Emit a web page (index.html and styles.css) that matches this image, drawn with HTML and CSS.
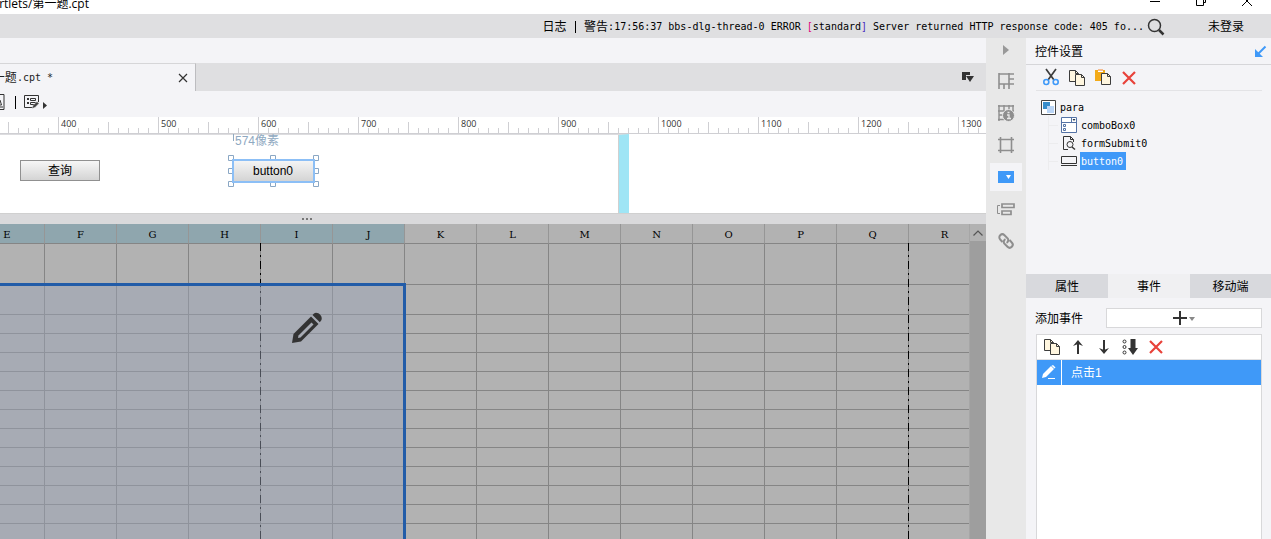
FILE: index.html
```html
<!DOCTYPE html>
<html lang="zh">
<head>
<meta charset="utf-8">
<title>第一题.cpt</title>
<link rel="stylesheet" href="styles.css">
</head>
<body>
<svg class="defs" aria-hidden="true">
  <symbol id="copy" viewBox="0 0 16 16"><path d="M.5.5h6l3 3v8h-9z" fill="#fff6df" stroke="#3c3c3c"/><path d="M6.500.5v3h3" fill="none" stroke="#3c3c3c"/><path d="M6.500 4.500h6l3 3v8h-9z" fill="#fff6df" stroke="#3c3c3c"/><path d="M12.500 4.500v3h3" fill="none" stroke="#3c3c3c"/></symbol>
  <symbol id="remove" viewBox="0 0 16 16"><path d="M2 2l12 12M14 2L2 14" stroke="#e8423a" stroke-width="2.200"/></symbol>
</svg>
<header class="titlebar">
  <span class="path">rtlets/第一题.cpt</span>
  <div class="window-buttons">
    <button aria-label="Minimize"><svg width="12" height="14"><path d="M1 1.500h10" stroke="#000"/></svg></button>
    <button aria-label="Restore"><svg width="12" height="14"><path d="M1.500-2v7.500h7V-2M8.500 2.500h2V-2" fill="none" stroke="#000"/></svg></button>
    <button aria-label="Close"><svg width="12" height="14"><path d="M1 6l10-10M11 6L1-4" stroke="#000"/></svg></button>
  </div>
</header>
<div class="statusbar">
  <p class="log">日志 <i></i> 警告<span class="mono">:17:56:37 bbs-dlg-thread-0 ERROR <b>[</b>standard<em>]</em> Server returned HTTP response code: 405 fo...</span></p>
  <button class="search" aria-label="Search"><svg width="18" height="18"><circle cx="7.500" cy="7.500" r="6" fill="none" stroke="#333" stroke-width="1.500"/><path d="M12 12l4.500 4.500" stroke="#333" stroke-width="2.500"/></svg></button>
  <a class="login" href="#">未登录</a>
</div>
<div class="workspace">
  <main class="editor">
    <div class="spacer"></div>
    <div class="tabs">
      <div class="tab"><span class="tab-name">一题<span class="mono">.cpt *</span></span><button aria-label="Close tab"><svg width="10" height="10"><path d="M1 1l8 8M9 1L1 9" stroke="#333" stroke-width="1.200"/></svg></button></div>
      <button class="tab-list" aria-label="Tab list"><svg width="12" height="10"><path d="M0 0h8v3H4v5H0z" fill="#333"/><path d="M4 4h8L8 10z" fill="#333"/></svg></button>
    </div>
    <div class="toolbar">
      <button aria-label="Preview"><svg width="5" height="16"><path d="M0 .5h4v15H0M0 6l1.500 5H0M0 13h3" fill="none" stroke="#333"/></svg></button>
      <i class="bar"></i>
      <button class="form-edit" aria-label="Edit form"><svg width="24" height="16"><path d="M9 13.500H.5v-12h14V8" fill="none" stroke="#333"/><path d="M3 5h2M3 9h2" stroke="#333" stroke-width="2"/><path d="M6.500 4.500h5v2h-5zM6.500 8.500h5v2h-5z" fill="none" stroke="#333"/><path d="M8 14.500l1-3 4-4 2 2-4 4z" fill="#444" stroke="#f4f4f7" stroke-width=".5"/><path d="M19 8v7l4-3.500z" fill="#333"/></svg></button>
    </div>
    <div class="ruler"><span>400</span><span>500</span><span>600</span><span>700</span><span>800</span><span>900</span><span>1000</span><span>1100</span><span>1200</span><span>1300</span></div>
    <section class="canvas">
      <div class="edge"></div>
      <button class="widget query">查询</button>
      <span class="measure">574像素</span>
      <div class="selected">
        <button class="widget">button0</button>
        <svg width="90" height="32"><path d="M5 5h81v22H5z" fill="none" stroke="#8cbff6" stroke-width="2"/><path d="M.5.5h5v5h-5zM42.500.5h5v5h-5zM85.500.5h5v5h-5zM.5 13.500h5v5h-5zM85.500 13.500h5v5h-5zM.5 26.500h5v5h-5zM42.500 26.500h5v5h-5zM85.500 26.500h5v5h-5z" fill="#fff" stroke="#8aa7c4"/><path d="M5 5h81v22H5z" fill="none" stroke="#8cbff6" stroke-width="2"/></svg>
      </div>
    </section>
    <div class="splitter"><svg width="12" height="3"><path d="M1 0h2v2H1zM5 0h2v2H5zM9 0h2v2H9z" fill="#777"/></svg></div>
    <div class="sheet">
      <div class="grid">
        <table>
          <colgroup><col class="first"><col span="13"></colgroup>
          <thead><tr><th class="on">E</th><th class="on">F</th><th class="on">G</th><th class="on">H</th><th class="on">I</th><th class="on">J</th><th>K</th><th>L</th><th>M</th><th>N</th><th>O</th><th>P</th><th>Q</th><th>R</th></tr></thead>
          <tbody>
            <tr class="tall"><td></td><td></td><td></td><td></td><td></td><td></td><td></td><td></td><td></td><td></td><td></td><td></td><td></td><td></td></tr>
            <tr class="medium"><td></td><td></td><td></td><td></td><td></td><td></td><td></td><td></td><td></td><td></td><td></td><td></td><td></td><td></td></tr>
            <tr><td></td><td></td><td></td><td></td><td></td><td></td><td></td><td></td><td></td><td></td><td></td><td></td><td></td><td></td></tr>
            <tr><td></td><td></td><td></td><td></td><td></td><td></td><td></td><td></td><td></td><td></td><td></td><td></td><td></td><td></td></tr>
            <tr><td></td><td></td><td></td><td></td><td></td><td></td><td></td><td></td><td></td><td></td><td></td><td></td><td></td><td></td></tr>
            <tr><td></td><td></td><td></td><td></td><td></td><td></td><td></td><td></td><td></td><td></td><td></td><td></td><td></td><td></td></tr>
            <tr><td></td><td></td><td></td><td></td><td></td><td></td><td></td><td></td><td></td><td></td><td></td><td></td><td></td><td></td></tr>
            <tr><td></td><td></td><td></td><td></td><td></td><td></td><td></td><td></td><td></td><td></td><td></td><td></td><td></td><td></td></tr>
            <tr><td></td><td></td><td></td><td></td><td></td><td></td><td></td><td></td><td></td><td></td><td></td><td></td><td></td><td></td></tr>
            <tr><td></td><td></td><td></td><td></td><td></td><td></td><td></td><td></td><td></td><td></td><td></td><td></td><td></td><td></td></tr>
            <tr><td></td><td></td><td></td><td></td><td></td><td></td><td></td><td></td><td></td><td></td><td></td><td></td><td></td><td></td></tr>
            <tr><td></td><td></td><td></td><td></td><td></td><td></td><td></td><td></td><td></td><td></td><td></td><td></td><td></td><td></td></tr>
            <tr><td></td><td></td><td></td><td></td><td></td><td></td><td></td><td></td><td></td><td></td><td></td><td></td><td></td><td></td></tr>
            <tr><td></td><td></td><td></td><td></td><td></td><td></td><td></td><td></td><td></td><td></td><td></td><td></td><td></td><td></td></tr>
          </tbody>
        </table>
        <i class="page-break one"></i><i class="page-break two"></i>
        <div class="selection"></div>
        <svg class="pencil" width="32" height="32" viewBox="0 0 32 32"><path d="M1 31l1.500-9L20 4.500l7.500 7.500L10 29.500z" fill="#333"/><path d="M7.500 23.500L20.500 10.500l2 2L9.500 25.500l-2.500.5z" fill="#a7abb4"/><path d="M21.500 3l1.500-1.500c3-2.500 9 2 7.500 6.500L28.800 10.200z" fill="#333"/></svg>
      </div>
      <div class="scroll"><button aria-label="Scroll up"><svg width="10" height="6"><path d="M.5 5.500L5 1l4.500 4.500" fill="none" stroke="#555" stroke-width="1.200"/></svg></button></div>
    </div>
  </main>
  <nav class="rail">
    <button class="fold" aria-label="Collapse"><svg width="6" height="10"><path d="M0 0v10l6-5z" fill="#999"/></svg></button>
    <button aria-label="Cell element"><svg width="16" height="16"><path d="M1 1h15M1 0v16M1 11h15M11 0v16M11 6h5M6 11v5" fill="none" stroke="#8e8e8e" stroke-width="1.600"/></svg></button>
    <button aria-label="Cell attributes"><svg width="16" height="16"><path d="M1 0v16M0 1h16M0 6h16M0 14.500h6M6 0v6M11 0v6M15 0v6M1 10h4" stroke="#8e8e8e" stroke-width="1.400"/><circle cx="10.500" cy="10.500" r="6" fill="#8e8e8e" stroke="#e8e8e8"/><path d="M9.500 7.500h2M9 10h2v3.500M9 13.500h4" stroke="#e8e8e8" stroke-width="1.300" fill="none"/></svg></button>
    <button aria-label="Floating element"><svg width="16" height="16"><path d="M2.500 0v16M13.500 0v16M0 2.500h16M0 13.500h16" stroke="#8e8e8e" stroke-width="1.600"/></svg></button>
    <button class="active" aria-label="Widget settings"><svg width="16" height="12"><path d="M0 0h16v12H0z" fill="#3f99f8"/><path d="M8 4h5L10.500 8z" fill="#fff"/></svg></button>
    <button aria-label="Conditions"><svg width="18" height="13"><path d="M3 2.500H.5v8H3" fill="none" stroke="#8e8e8e"/><path d="M5 1h12v3.500H5zM5 8h9v3.500H5z" fill="none" stroke="#8e8e8e" stroke-width="1.700"/></svg></button>
    <button aria-label="Hyperlink"><svg width="16" height="16" viewBox="0 0 16 16"><g fill="none" stroke="#8e8e8e" stroke-width="2"><path d="M4.500 9L2.200 6.500A3 3 0 0 1 6.500 2.200L9.800 5.500A3 3 0 0 1 8.500 9.800"/><path d="M11.500 7l2.300 2.500A3 3 0 0 1 9.500 13.800L6.200 10.500A3 3 0 0 1 7.500 6.200"/></g></svg></button>
  </nav>
  <aside class="panel">
    <header class="panel-head"><h2>控件设置</h2><svg width="12" height="12"><path d="M11.500.5L3 9" stroke="#3f99f8" stroke-width="2"/><path d="M1 3v8h8z" fill="#3f99f8"/></svg></header>
    <div class="panel-tools">
      <button aria-label="Cut"><svg width="16" height="17"><path d="M3 0l8 11M13 0L5 11" stroke="#3c3c3c" stroke-width="1.700"/><circle cx="3.300" cy="13" r="2.500" fill="none" stroke="#3f99f8" stroke-width="1.600"/><circle cx="12.700" cy="13" r="2.500" fill="none" stroke="#3f99f8" stroke-width="1.600"/></svg></button>
      <button aria-label="Copy"><svg width="16" height="16"><use href="#copy"/></svg></button>
      <button aria-label="Paste"><svg width="16" height="17"><path d="M0 1h10v11H0z" fill="#f3aa18"/><path d="M3 0h5v3H3z" fill="#fff"/><path d="M3 1h5" stroke="#e87822"/><path d="M6.500 4.500h6l3 3v8h-9z" fill="#fff6df" stroke="#3c3c3c"/><path d="M12.500 4.500v3h3" fill="none" stroke="#3c3c3c"/></svg></button>
      <button aria-label="Delete"><svg width="16" height="16"><use href="#remove"/></svg></button>
    </div>
    <ul class="tree mono">
      <li><svg width="15" height="15"><path d="M.5.5h14v14H.5z" fill="#fff" stroke="#444"/><path d="M2 2h7v7H2z" fill="#368ccb"/><path d="M6 6h7v7H6z" fill="#b9d4f5"/></svg><span>para</span>
        <ul>
          <li><svg width="16" height="16"><path d="M.5.5h15v15H.5zM.5 5.500h15M10.500.5v5" fill="#fff" stroke="#5472a5"/><path d="M11.500 2h3L13 4z" fill="#234"/><path d="M2.500 7.500h2v2h-2zM2.500 11.500h2v2h-2z" fill="none" stroke="#5472a5"/></svg><span>comboBox0</span></li>
          <li><svg width="16" height="16"><path d="M7 14.500H2.500V1.500h7l3 3V7M9.500 1.500v3h3" fill="none" stroke="#333"/><circle cx="9" cy="9.500" r="3" fill="none" stroke="#333"/><path d="M11 12l3 2.500" stroke="#333" stroke-width="1.500"/></svg><span>formSubmit0</span></li>
          <li><svg width="16" height="10"><path d="M.5.5h15v7H.5z" fill="none" stroke="#333"/><path d="M0 9.500h16" stroke="#333"/></svg><span class="current">button0</span></li>
        </ul>
      </li>
    </ul>
    <div class="panel-tabs"><button>属性</button><button class="shown">事件</button><button>移动端</button></div>
    <div class="add-row"><label for="add">添加事件</label><button id="add"><svg width="24" height="14"><path d="M0 7h14M7 0v14" stroke="#333" stroke-width="2"/><path d="M16 6h6l-3 4z" fill="#888"/></svg></button></div>
    <section class="events">
      <div class="event-tools">
        <button aria-label="Copy event"><svg width="16" height="16"><use href="#copy"/></svg></button>
        <button aria-label="Move up"><svg width="10" height="14"><path d="M5 14V3" stroke="#333" stroke-width="2"/><path d="M0 6l5-6 5 6-5-2z" fill="#333"/></svg></button>
        <button aria-label="Move down"><svg width="10" height="14"><path d="M5 0v11" stroke="#333" stroke-width="2"/><path d="M0 8l5 6 5-6-5 2z" fill="#333"/></svg></button>
        <button aria-label="Sort"><svg width="16" height="16"><g fill="none" stroke="#333"><circle cx="2.500" cy="2.500" r="1.500"/><circle cx="2.500" cy="8" r="1.500"/><circle cx="2.500" cy="13.500" r="1.500"/></g><path d="M8.500 0h5v9H16l-5 7-5-7h2.500z" fill="#333"/></svg></button>
        <button aria-label="Delete event"><svg width="16" height="16"><use href="#remove"/></svg></button>
      </div>
      <div class="event"><button aria-label="Edit event"><svg width="14" height="16"><path d="M0 13l1-4 8-8 3 3-8 8z" fill="#fff"/><path d="M9.500.8L11 0l2.500 2.500-1 1z" fill="#fff"/><path d="M6 13.500h7" stroke="#fff"/></svg></button><span>点击1</span></div>
    </section>
  </aside>
</div>
</body>
</html>
```
FILE: styles.css
```css
* { box-sizing: border-box; }
body {
  margin: 0;
  height: 100vh;
  display: flex;
  flex-direction: column;
  overflow: hidden;
  background: #f4f4f7;
  color: #000;
  font: 12px/16px "Liberation Sans", "Noto Sans CJK SC", sans-serif;
}
button {
  display: flex;
  align-items: center;
  justify-content: center;
  margin: 0;
  padding: 0;
  border: 0;
  background: none;
  color: inherit;
  font: inherit;
}
svg { display: block; flex: none; overflow: visible; }
.defs { position: absolute; width: 0; height: 0; }
.mono { font-family: "DejaVu Sans Mono", "Noto Sans CJK SC", monospace; font-size: 10px; }

.titlebar {
  flex: none;
  display: flex;
  justify-content: space-between;
  height: 14px;
  overflow: hidden;
  background: #fff;
}
.path {
  width: 89px;
  display: flex;
  justify-content: flex-end;
  font: 12px/8px "Open Sans", "Noto Sans CJK SC", sans-serif;
  white-space: nowrap;
}
.window-buttons { display: flex; gap: 34px; padding-right: 18px; }

.statusbar {
  flex: none;
  display: flex;
  align-items: center;
  justify-content: flex-end;
  height: 24px;
  padding: 2px 27px 0 0;
  background: #dfdfe1;
}
.log { margin: 0; display: flex; align-items: center; white-space: pre; }
.log i { width: 1px; height: 12px; margin: 0 5px; background: #000; }
.log b { color: #e0007c; font-weight: normal; }
.log em { color: #4a2fc0; font-style: normal; }
.search { margin: 0 43px 0 3px; }
.login { color: #000; text-decoration: none; }

.workspace { flex: 1; display: flex; min-height: 0; }
.editor { flex: 1; min-width: 0; display: flex; flex-direction: column; }
.spacer { flex: none; height: 25px; }
.tabs {
  flex: none;
  display: flex;
  justify-content: space-between;
  height: 28px;
  padding-right: 12px;
  background: #dfdfe1;
}
.tab {
  width: 196px;
  display: flex;
  align-items: center;
  justify-content: space-between;
  padding-right: 7px;
  border-top: 1px solid #d6d6d8;
  border-right: 1px solid #bdbdc0;
  background: #f4f4f7;
}
.tab-name { width: 53px; display: flex; justify-content: flex-end; white-space: pre; color: #222; }
.toolbar { flex: none; display: flex; align-items: center; height: 26px; padding-bottom: 4px; }
.bar { width: 1px; height: 13px; margin: 0 8px 0 10px; background: #000; }
.ruler {
  flex: none;
  display: flex;
  height: 17px;
  padding-left: 58px;
  overflow: hidden;
  border-bottom: 1px solid #cfcfd3;
  background:
    repeating-linear-gradient(90deg, #cfcfd3 0 1px, transparent 1px 100px) 58px 0 / 100px 100% repeat-x,
    repeating-linear-gradient(90deg, #cfcfd3 0 1px, transparent 1px 100px) 8px 100% / 100px 11px repeat-x,
    repeating-linear-gradient(90deg, #cfcfd3 0 1px, transparent 1px 10px) 8px 100% / 10px 5px repeat-x,
    #fff;
}
.ruler span { flex: none; width: 100px; padding-left: 3px; font: 9px/13px "Open Sans", sans-serif; color: #333; }

.canvas {
  position: relative;
  flex: none;
  height: 79px;
  overflow: hidden;
  background: #fff;
}
.edge {
  width: 629px;
  height: 79px;
  border-top: 1px solid #dcdcdf;
  border-right: 10px solid #9fe5f5;
  box-shadow: inset -1px 0 #d0d0d0;
}
.widget {
  border: 1px solid #909090;
  background: linear-gradient(#f6f6f6, #d4d4d4);
}
.query { position: absolute; left: 20px; top: 26px; width: 80px; height: 21px; }
.measure {
  position: absolute;
  left: 233px;
  top: 0;
  padding-left: 2px;
  line-height: 15px;
  color: #8fa9c1;
  background: linear-gradient(#8fa9c1, #8fa9c1) 0 0 / 1px 7px no-repeat;
}
.selected { position: absolute; left: 228px; top: 21px; padding: 5px; }
.selected .widget { width: 80px; height: 21px; border: 0; }
.selected svg { position: absolute; left: 0; top: 0; }

.splitter {
  flex: none;
  display: flex;
  align-items: center;
  height: 11px;
  padding-left: 301px;
  border-top: 1px solid #d0d0d0;
  background: #d9d9db;
}
.sheet { flex: 1; display: flex; min-height: 0; }
.grid { position: relative; flex: 1; min-width: 0; overflow: hidden; background: #b2b2b2; }
table { width: 981px; table-layout: fixed; border-collapse: separate; border-spacing: 0; }
col { width: 72px; }
.first { width: 45px; }
th, td { height: 19px; padding: 0; border-right: 1px solid #858585; border-bottom: 1px solid #858585; }
th {
  height: 20px;
  border-right-color: #969696;
  font: 10px/16px "DejaVu Serif", serif;
  padding-top: 3px;
}
th:first-child { padding-right: 30px; }
.on { background: #8fa6ae; }
.tall td { height: 41px; }
.medium td { height: 30px; }
.page-break {
  position: absolute;
  top: 19px;
  bottom: 0;
  width: 1px;
  background: repeating-linear-gradient(#000 0 8px, transparent 8px 12px, #000 12px 14px, transparent 14px 18px);
}
.one { left: 260px; }
.two { left: 908px; }
.selection {
  position: absolute;
  left: 0;
  top: 59px;
  bottom: 0;
  width: 406px;
  border: solid #225ca8;
  border-width: 3px 3px 0 0;
  background: rgba(155, 163, 182, .48);
  background-clip: padding-box;
}
.pencil { position: absolute; left: 291px; top: 88px; }
.scroll { width: 17px; border-left: 1px solid #a6a6a6; background: #9e9e9e; }
.scroll button { width: 16px; height: 17px; background: #b2b2b2; }

.rail { flex: none; width: 40px; display: flex; flex-direction: column; align-items: center; background: #e8e8e8; }
.rail button { width: 32px; height: 32px; }
.rail .fold { height: 27px; padding-bottom: 3px; }
.rail .active { height: 28px; margin: 2px 0; background: #f4f4f7; }

.panel { flex: none; width: 245px; display: flex; flex-direction: column; }
.panel-head {
  display: flex;
  align-items: center;
  justify-content: space-between;
  height: 27px;
  padding: 1px 5px 0 9px;
  border-bottom: 1px solid #d6d6d9;
}
h2 { margin: 0; font: inherit; }
.panel-tools {
  display: flex;
  align-items: center;
  gap: 10px;
  height: 26px;
  margin: 0 9px 0 10px;
  padding-left: 7px;
  border-bottom: 1px solid #e3e3e6;
}
.tree { height: 183px; margin: 0; padding: 7px 0 0 15px; list-style: none; line-height: 18px; }
.tree ul { margin: 0 0 0 7px; padding: 0; list-style: none; border-left: 1px solid #ececee; }
.tree li { display: grid; grid-template-columns: 15px 1fr; column-gap: 3px; align-items: center; }
.tree li > ul { grid-column: 1 / 3; }
.tree ul li { grid-template-columns: 16px 1fr; padding-left: 12px; background: linear-gradient(#ececee, #ececee) 0 9px / 9px 1px no-repeat; }
.tree span { justify-self: start; height: 18px; padding: 1px 2px 0 1px; }
.tree .current { padding-right: 3px; background: #3f99f8; color: #fff; }
.panel-tabs { display: grid; grid-template-columns: 82px 82px 1fr; height: 24px; background: #d8d9dd; }
.panel-tabs button { padding-top: 2px; }
.panel-tabs .shown { background: #f0f0f2; }
.add-row { display: flex; align-items: center; justify-content: space-between; padding: 10px 9px 6px; }
.add-row label { padding-top: 2px; }
.add-row button { width: 156px; height: 20px; padding-left: 2px; border: 1px solid #d8d8da; background: #fff; }
.events { flex: 1; margin: 0 9px 0 10px; border: 1px solid #d8d8da; border-bottom: 0; background: #fff; }
.event-tools { display: flex; align-items: center; height: 25px; padding-left: 2px; border-bottom: 1px solid #e0e0e2; }
.event-tools button { width: 26px; height: 24px; }
.event { display: flex; align-items: center; height: 25px; background: #3f99f8; color: #fff; }
.event button { width: 25px; height: 25px; border-right: 1px solid #fff; }
.event span { padding-left: 9px; }
```
